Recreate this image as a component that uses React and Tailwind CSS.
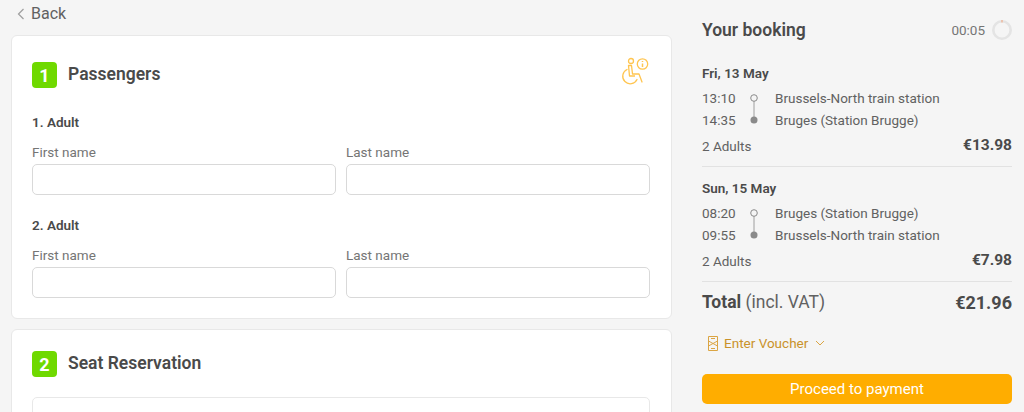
import React from "react";

const Field = ({ label }) => (
  <div className="flex-1 min-w-0">
    <div className="text-[13.5px] leading-[20px] text-[#757575] mb-[2px]">{label}</div>
    <div className="h-[31px] bg-white border border-[#d9d9d9] rounded-[5px]" />
  </div>
);

const Person = ({ title, className }) => (
  <div className={className}>
    <div className="text-[13.5px] leading-[20px] font-semibold text-[#4a4a4a] mb-[10px]">{title}</div>
    <div className="flex gap-[10px]">
      <Field label="First name" />
      <Field label="Last name" />
    </div>
  </div>
);

const Badge = ({ n }) => (
  <div className="w-[25px] h-[26px] rounded-[4px] bg-[#6fd900] text-white text-[18px] font-bold flex items-center justify-center">{n}</div>
);

const Leg = ({ date, t1, t2, s1, s2, price }) => (
  <div>
    <div className="text-[13.5px] leading-[20px] font-semibold text-[#4a4a4a] mb-[4px]">{date}</div>
    <div className="flex text-[13.5px] leading-[22px] text-[#616161]">
      <div className="w-[44px]">
        <div>{t1}</div>
        <div>{t2}</div>
      </div>
      <div className="w-[29px] flex flex-col items-start pt-[7px]">
        <svg width="8" height="30" viewBox="0 0 8 30" className="ml-[4px]">
          <line x1="4" y1="7" x2="4" y2="24" stroke="#9e9e9e" strokeWidth="1" />
          <circle cx="4" cy="4" r="3.3" fill="#f5f5f5" stroke="#8a8a8a" strokeWidth="1" />
          <circle cx="4" cy="26" r="3.5" fill="#8a8a8a" />
        </svg>
      </div>
      <div>
        <div>{s1}</div>
        <div>{s2}</div>
      </div>
    </div>
    <div className="flex justify-between items-center mt-[3px] h-[24px]">
      <span className="text-[13.5px] text-[#616161]">2 Adults</span>
      <span className="text-[15.5px] font-bold text-[#4a4a4a]">{price}</span>
    </div>
  </div>
);

export default function App() {
  return (
    <div className="h-[412px] overflow-hidden bg-[#f5f5f5] flex font-['Roboto',sans-serif]">
      <div className="w-[661px] ml-[11px] shrink-0">
        <div className="h-[35px] flex items-center pl-[6px] pb-[7px] gap-[6px] text-[#616161] text-[16px]">
          <svg width="8" height="12" viewBox="0 0 8 12" fill="none" stroke="#9e9e9e" strokeWidth="1.2">
            <path d="M6.5 1 L1.5 6 L6.5 11" />
          </svg>
          <span>Back</span>
        </div>
        <div className="bg-white border border-[#e8e8e8] rounded-[6px] h-[284px] pl-[20px] pr-[21px] pt-[25px]">
          <div className="flex items-center">
            <Badge n="1" />
            <h2 className="ml-[11px] pb-[2px] text-[17.5px] font-semibold text-[#4a4a4a]">Passengers</h2>
            <svg width="30" height="30" viewBox="0 0 30 30" fill="none" stroke="#ffc550" strokeWidth="1.3" className="ml-auto mt-[-9px]">
              <circle cx="11" cy="5" r="2.5" />
              <path d="M8.5 9.5 H11.5 L12.5 18 H19 L22 26" strokeLinejoin="round" strokeLinecap="round" />
              <path d="M8.5 9.5 L9.5 20 H15" strokeLinejoin="round" />
              <path d="M7 13.5 A7.5 7.5 0 1 0 17 23.5" strokeLinecap="round" />
              <circle cx="22.5" cy="8" r="5.2" />
              <path d="M22.5 7.5 V11 M22.5 5 V6" strokeWidth="1.5" />
            </svg>
          </div>
          <Person title="1. Adult" className="mt-[23px]" />
          <Person title="2. Adult" className="mt-[20px]" />
        </div>
        <div className="bg-white border border-[#e8e8e8] rounded-[6px] h-[120px] mt-[10px] pl-[20px] pr-[21px] pt-[20px]">
          <div className="flex items-center">
            <Badge n="2" />
            <h2 className="ml-[11px] pb-[2px] text-[17.5px] font-semibold text-[#4a4a4a]">Seat Reservation</h2>
          </div>
          <div className="mt-[19px] h-[60px] border border-[#e8e8e8] rounded-[5px]" />
        </div>
      </div>

      <div className="w-[310px] ml-[30px] shrink-0 pt-[19px]">
        <div className="flex items-center justify-between h-[22px]">
          <h2 className="text-[17.5px] font-semibold text-[#4a4a4a]">Your booking</h2>
          <div className="flex items-center gap-[7px]">
            <span className="text-[13.5px] text-[#757575]">00:05</span>
            <svg width="20" height="20" viewBox="0 0 20 20" fill="none">
              <circle cx="10" cy="10" r="8.7" stroke="#e4e4e4" strokeWidth="2.6" />
              <path d="M10 0 V2.5" stroke="#f3a27a" strokeWidth="1" />
            </svg>
          </div>
        </div>
        <div className="mt-[22px] pb-[8px] border-b border-[#e2e2e2]">
          <Leg date="Fri, 13 May" t1="13:10" t2="14:35" s1="Brussels-North train station" s2="Bruges (Station Brugge)" price="€13.98" />
        </div>
        <div className="mt-[11px] pb-[8px] border-b border-[#e2e2e2]">
          <Leg date="Sun, 15 May" t1="08:20" t2="09:55" s1="Bruges (Station Brugge)" s2="Brussels-North train station" price="€7.98" />
        </div>
        <div className="flex justify-between items-center h-[41px] text-[#4a4a4a]">
          <span className="text-[17.5px]"><span className="font-bold">Total</span> <span className="text-[#616161]">(incl. VAT)</span></span>
          <span className="text-[18px] font-bold">€21.96</span>
        </div>
        <div className="flex items-center h-[20px] mt-[10px] ml-[6px] text-[#c9922a] text-[13.5px]">
          <svg width="10" height="15" viewBox="0 0 10 15" fill="none" stroke="#dba543" strokeWidth="1">
            <path d="M0.5 0.5 H9.5 V14.5 H0.5 Z M0.5 5 L9.5 10 M9.5 5 L0.5 10 M3 2.5 H7 M3 12.5 H7" />
          </svg>
          <span className="ml-[6px]">Enter Voucher</span>
          <svg width="10" height="6" viewBox="0 0 10 6" fill="none" stroke="#dba543" strokeWidth="1" className="ml-[7px]">
            <path d="M1 1 L5 5 L9 1" />
          </svg>
        </div>
        <button className="mt-[21px] w-full h-[30px] rounded-[5px] bg-[#ffad00] text-white text-[15px]">Proceed to payment</button>
      </div>
    </div>
  );
}
